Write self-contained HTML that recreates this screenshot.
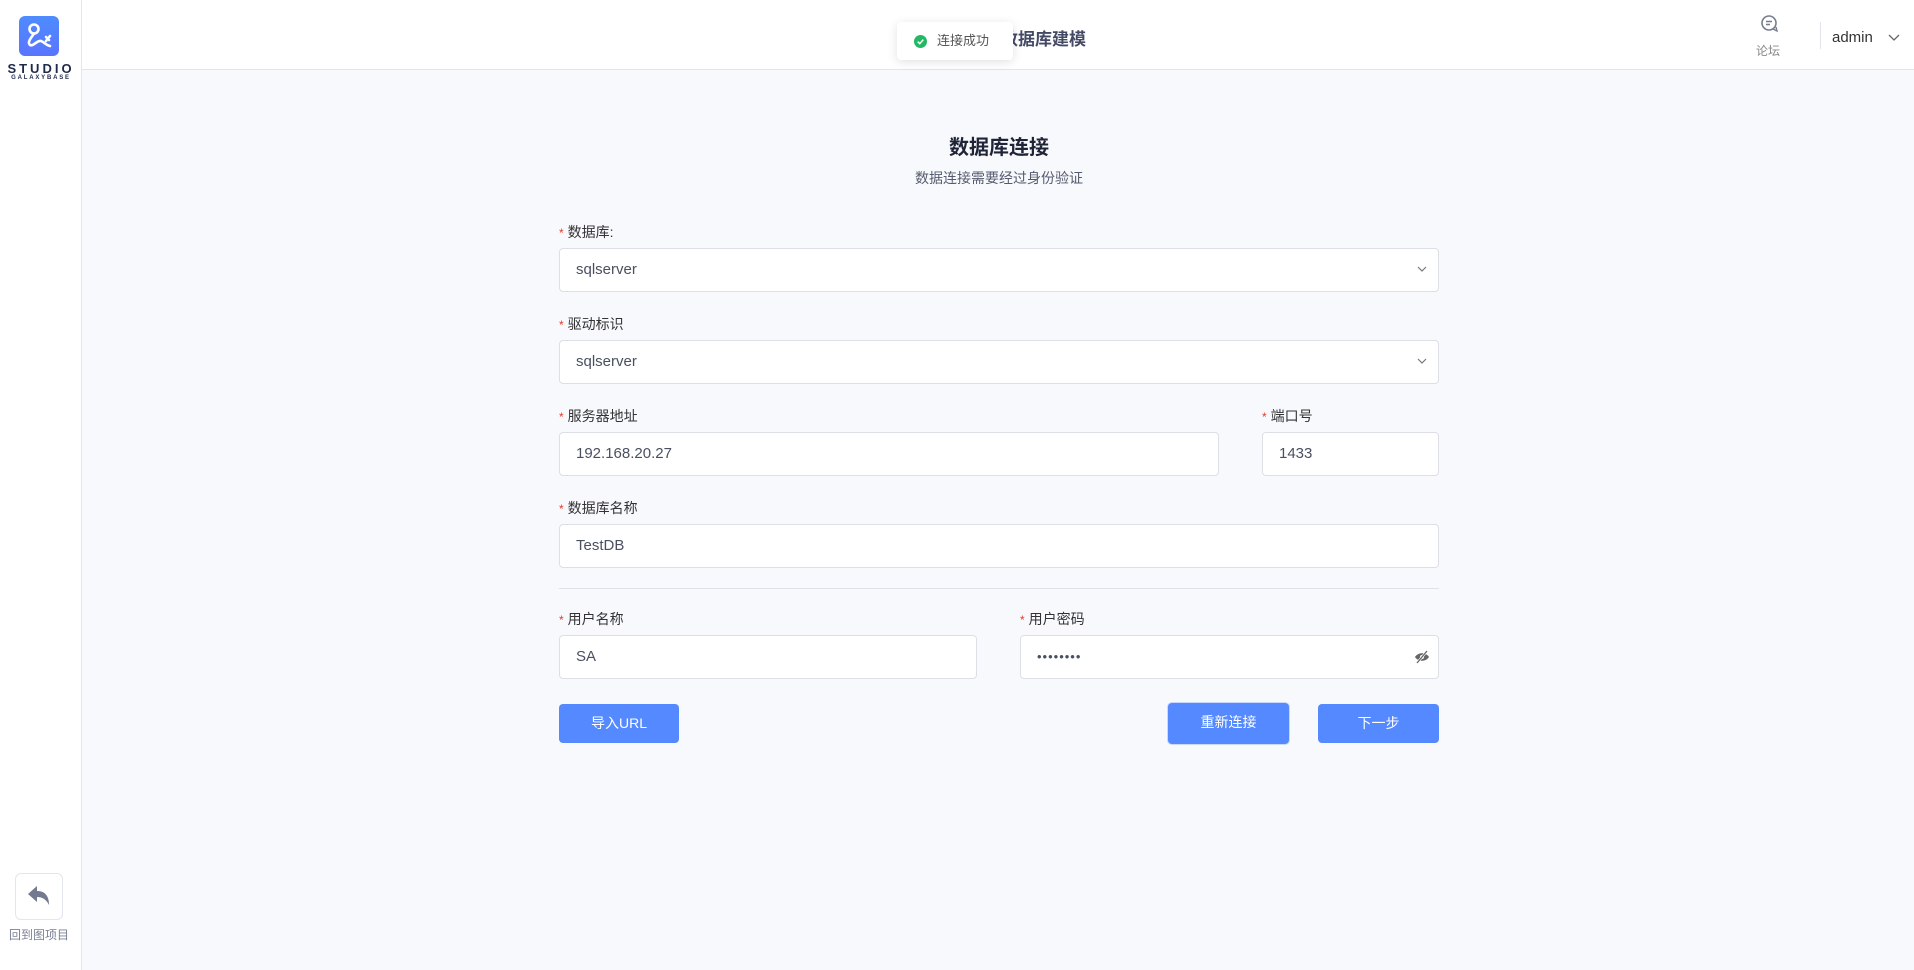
<!DOCTYPE html>
<html><head><meta charset="utf-8"><style>
*{box-sizing:border-box;margin:0;padding:0}
body{width:1914px;height:970px;position:relative;background:#f8f9fd;font-family:"Liberation Sans","Noto Sans CJK SC",sans-serif;overflow:hidden;color:#333}
.abs{position:absolute}
.side{left:0;top:0;width:82px;height:970px;background:#fff;border-right:1px solid #e3e6ee}
.head{left:82px;top:0;right:0;height:70px;background:#fff;border-bottom:1px solid #e1e4ec}
.lbl{font-size:14px;color:#333;line-height:16px}
.lbl b{color:#e4392a;font-weight:normal;font-size:12px;margin-right:4px}
.inp{background:#fff;border:1px solid #dcdfe6;border-radius:4px;height:44px;font-size:15px;color:#4a5060;padding-left:16px;line-height:42px}
.btn{background:#5589ff;color:#fff;border-radius:4px;font-size:14px;text-align:center;line-height:39px;height:39px}
</style></head><body>
<div class="abs side"></div>
<div class="abs" style="left:19px;top:16px;width:40px;height:40px;border-radius:6px;background:linear-gradient(#4e8cff,#5a74ff)">
<svg width="40" height="40" viewBox="0 0 40 40"><g fill="none" stroke="#fff" stroke-width="2.6" stroke-linecap="round"><circle cx="15" cy="13" r="4.5"/><path d="M15 17.5 C12 22 8 26 11 29 C14 31 18 24 22 25 C25 26 27 29 31 30"/><path d="M27 21 L30 24 M31 20 L27 25"/></g></svg></div>
<div class="abs" style="left:4px;top:61px;width:74px;text-align:center;font-size:13px;font-weight:bold;letter-spacing:3px;color:#1f2a4a">STUDIO</div>
<div class="abs" style="left:4px;top:75px;width:74px;text-align:center;font-size:6px;font-weight:bold;letter-spacing:1.8px;color:#1f2a4a">GALAXYBASE</div>
<div class="abs" style="left:15px;top:873px;width:48px;height:47px;border:1px solid #e3e6ee;border-radius:6px;background:#fff"></div>
<svg class="abs" style="left:26px;top:884px" width="26" height="24" viewBox="0 0 26 24"><path d="M2 10 L11 2 L11 7 C19 7 23 12 23 21 C20 15 16 13 11 13 L11 18 Z" fill="#737a8f"/></svg>
<div class="abs" style="left:0;top:926px;width:78px;text-align:center;font-size:12px;color:#7a8094">回到图项目</div>
<div class="abs head"></div>
<div class="abs" style="left:1001px;top:25px;font-size:17px;font-weight:bold;color:#444a66">数据库建模</div>
<div class="abs" style="left:897px;top:22px;width:116px;height:38px;background:#fff;border-radius:4px;box-shadow:0 2px 10px rgba(0,0,0,.12);font-size:13px;color:#555;line-height:38px;padding-left:40px;z-index:5">连接成功
<svg class="abs" style="left:17px;top:13px" width="13" height="13" viewBox="0 0 14 14"><circle cx="7" cy="7" r="7" fill="#22b864"/><path d="M4 7.2 L6.2 9.3 L10 5" stroke="#fff" stroke-width="1.6" fill="none"/></svg></div>
<svg class="abs" style="left:1759px;top:14px" width="22" height="20" viewBox="0 0 22 20"><circle cx="10" cy="9" r="7" fill="none" stroke="#777d8f" stroke-width="1.6"/><path d="M7 7.5h6M7 10.5h4" stroke="#777d8f" stroke-width="1.4"/><path d="M14 15 L18 17 L17 13" fill="none" stroke="#777d8f" stroke-width="1.4"/></svg>
<div class="abs" style="left:1756px;top:42px;font-size:12px;color:#888">论坛</div>
<div class="abs" style="left:1820px;top:22px;width:1px;height:27px;background:#e1e4ec"></div>
<div class="abs" style="left:1832px;top:29px;font-size:15px;color:#333">admin</div>
<svg class="abs" style="left:1888px;top:34px" width="12" height="8" viewBox="0 0 12 8"><path d="M1 1 L6 6 L11 1" fill="none" stroke="#666" stroke-width="1.3"/></svg>
<div class="abs" style="left:759px;top:131px;width:480px;text-align:center;font-size:20px;font-weight:bold;color:#1f2437">数据库连接</div>
<div class="abs" style="left:759px;top:168px;width:480px;text-align:center;font-size:14px;color:#555b6e">数据连接需要经过身份验证</div>

<div class="abs lbl" style="left:559px;top:224px"><b>*</b>数据库:</div>
<div class="abs inp" style="left:559px;top:248px;width:880px">sqlserver</div>
<svg class="abs" style="left:1417px;top:266px" width="10" height="7" viewBox="0 0 10 7"><path d="M1 1 L5 5 L9 1" fill="none" stroke="#777" stroke-width="1.2"/></svg>
<div class="abs lbl" style="left:559px;top:316px"><b>*</b>驱动标识</div>
<div class="abs inp" style="left:559px;top:340px;width:880px">sqlserver</div>
<svg class="abs" style="left:1417px;top:358px" width="10" height="7" viewBox="0 0 10 7"><path d="M1 1 L5 5 L9 1" fill="none" stroke="#777" stroke-width="1.2"/></svg>
<div class="abs lbl" style="left:559px;top:408px"><b>*</b>服务器地址</div>
<div class="abs inp" style="left:559px;top:432px;width:660px">192.168.20.27</div>
<div class="abs lbl" style="left:1262px;top:408px"><b>*</b>端口号</div>
<div class="abs inp" style="left:1262px;top:432px;width:177px">1433</div>
<div class="abs lbl" style="left:559px;top:500px"><b>*</b>数据库名称</div>
<div class="abs inp" style="left:559px;top:524px;width:880px">TestDB</div>
<div class="abs" style="left:559px;top:588px;width:880px;height:1px;background:#dfe2e8"></div>
<div class="abs lbl" style="left:559px;top:611px"><b>*</b>用户名称</div>
<div class="abs inp" style="left:559px;top:635px;width:418px">SA</div>
<div class="abs lbl" style="left:1020px;top:611px"><b>*</b>用户密码</div>
<div class="abs inp" style="left:1020px;top:635px;width:419px;letter-spacing:1px;font-size:13px">••••••••</div>
<svg class="abs" style="left:1414px;top:650px" width="16" height="14" viewBox="0 0 16 14"><path d="M1 7 C4 2 12 2 15 7 C12 12 4 12 1 7Z" fill="#666"/><circle cx="8" cy="7" r="2" fill="#fff"/><path d="M3 13 L13 1" stroke="#fff" stroke-width="2.5"/><path d="M3 13 L13 1" stroke="#666" stroke-width="1.3"/></svg>
<div class="abs btn" style="left:559px;top:704px;width:120px">导入URL</div>
<div class="abs btn" style="left:1168px;top:703px;width:121px;height:41px;box-shadow:0 0 0 1px #c7d9ff">重新连接</div>
<div class="abs btn" style="left:1318px;top:704px;width:121px">下一步</div>
</body></html>
